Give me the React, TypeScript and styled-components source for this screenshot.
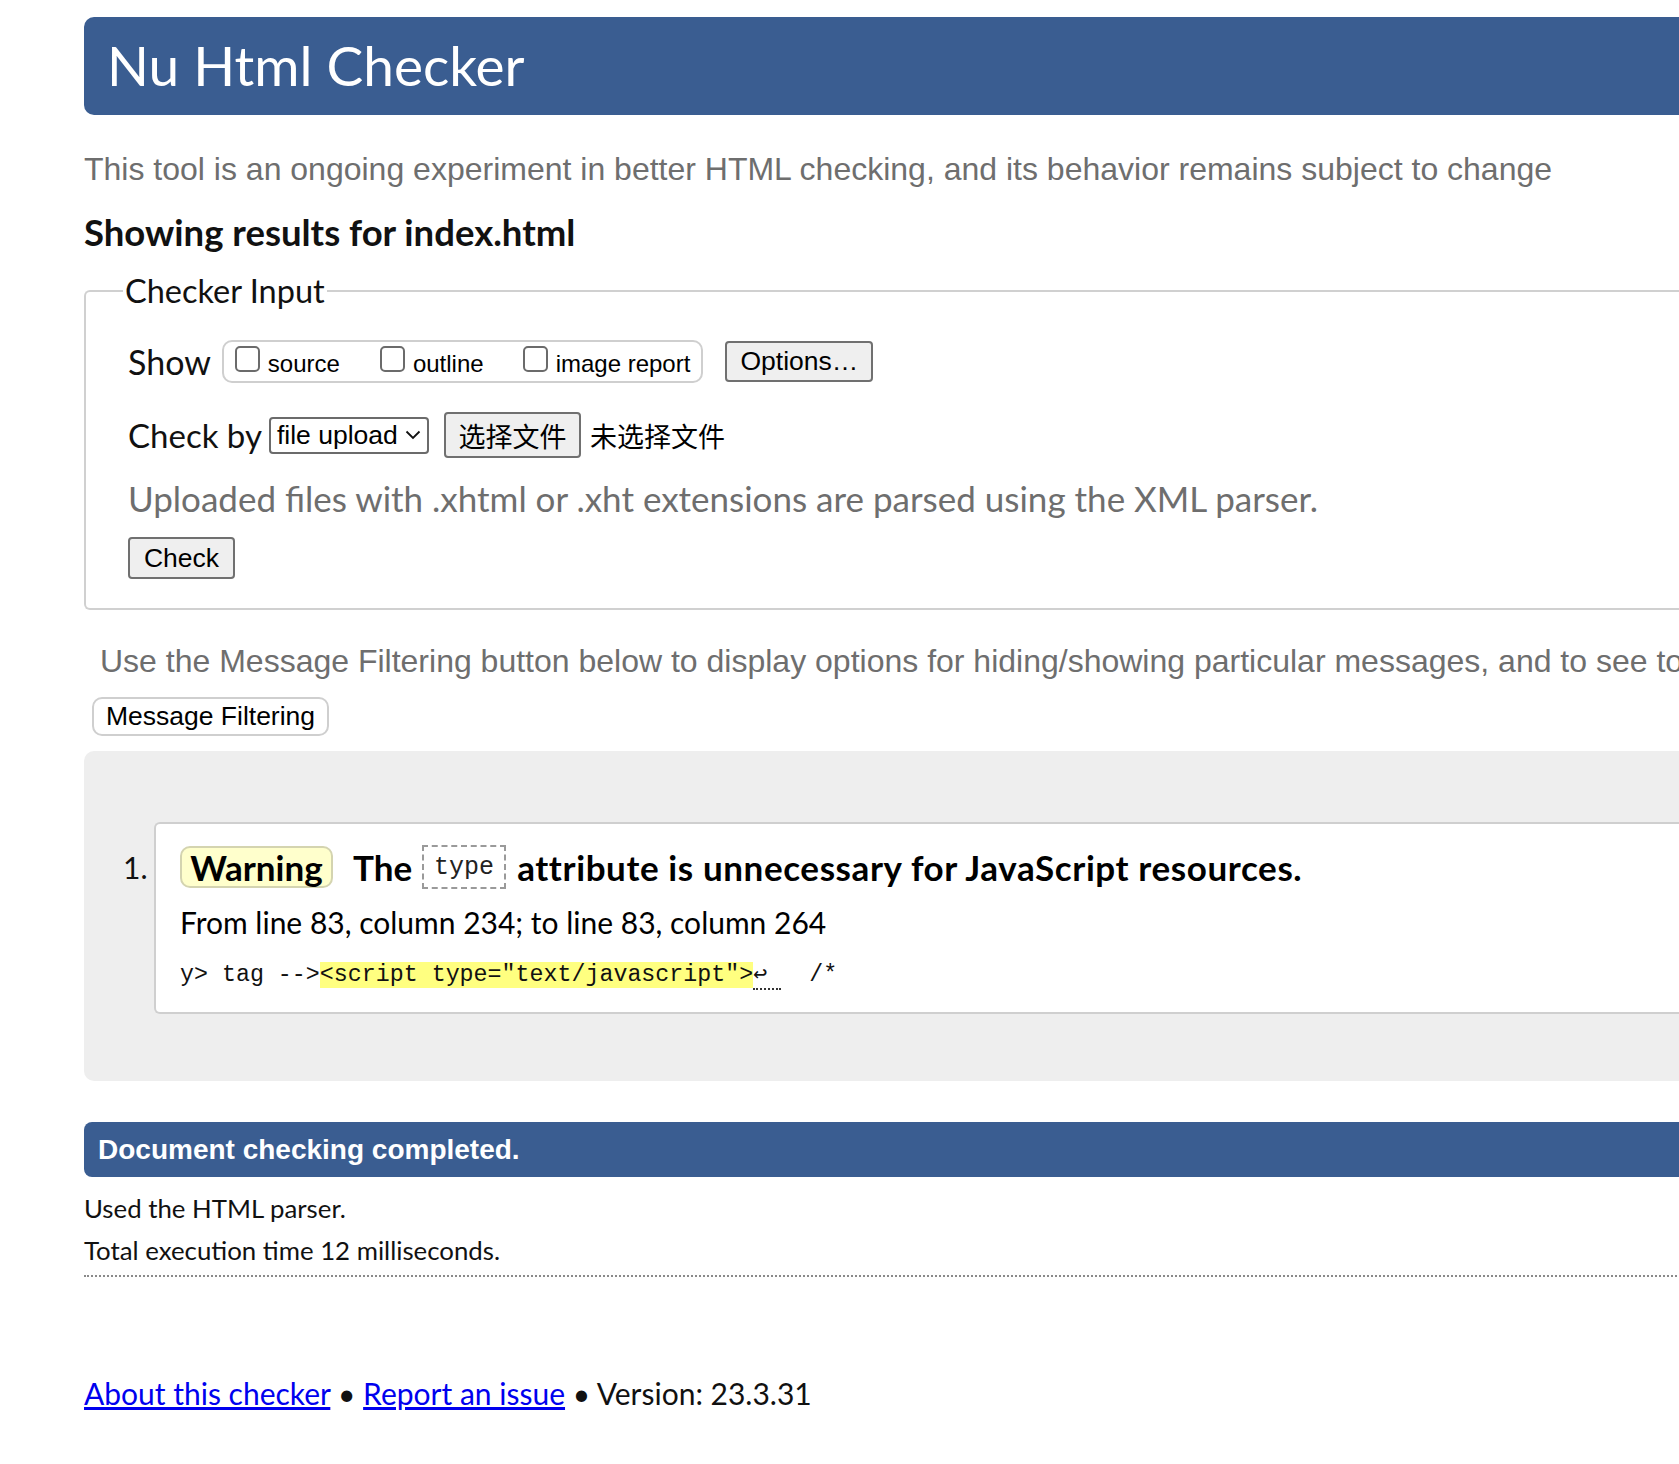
import React from 'react';
import styled, { createGlobalStyle } from 'styled-components';

const Global = createGlobalStyle`
  html, body { margin: 0; padding: 0; background: #fff; overflow: hidden; }
  body { font-family: Lato, "Noto Sans", sans-serif; color: #000; }
`;

const SEGOE = `Lato, "Noto Sans", sans-serif`;
const ARIAL = `"Liberation Sans", Arial, sans-serif`;
const CJK = `"Noto Sans CJK SC", "Liberation Sans", sans-serif`;
const MONO = `"Liberation Mono", "DejaVu Sans Mono", monospace`;
const BLUE = '#3a5d91';

const Page = styled.div`
  width: 1900px;
  box-sizing: border-box;
  padding: 17px 0 60px 84px;
`;

const Header = styled.h1`
  margin: 0;
  height: 98px;
  background: ${BLUE};
  color: #fff;
  border-radius: 10px 0 0 10px;
  padding-left: 23px;
  font: 400 55px/96px ${SEGOE};
`;

const Intro = styled.p`
  margin: 34px 0 0;
  font: 32px/40px ${ARIAL};
  color: #6e6e6e;
`;

const Showing = styled.h2`
  margin: 23px 0 0;
  font: 700 36.5px/40px ${SEGOE};
  color: #111;
`;

const Fieldset = styled.fieldset`
  margin: 19px 0 0;
  border: 2px solid #d0d0d0;
  border-radius: 6px 0 0 6px;
  border-right: none;
  padding: 29px 0 29px 42px;
`;

const Legend = styled.legend`
  margin-left: -5px;
  padding: 0 2px;
  font: 400 32.5px/40px ${SEGOE};
  color: #111;
`;

const Row = styled.div<{ $h: number; $mt?: number }>`
  display: flex;
  align-items: center;
  height: ${p => p.$h}px;
  margin-top: ${p => p.$mt ?? 0}px;
`;

const Label = styled.span<{ $mr: number; $size: number }>`
  font: 400 ${p => p.$size}px/40px ${SEGOE};
  color: #111;
  margin-right: ${p => p.$mr}px;
`;

const CheckGroup = styled.div`
  display: flex;
  align-items: center;
  height: 39px;
  border: 2px solid #cfcfcf;
  border-radius: 10px;
  padding: 0 11px 0 11px;
  margin-right: 22px;
`;

const CheckItem = styled.label<{ $mr?: number }>`
  display: flex;
  align-items: center;
  margin-right: ${p => p.$mr ?? 0}px;
  font: 24px/30px ${ARIAL};
  color: #000;
  padding-top: 4px;
`;

const Box = styled.span`
  display: inline-block;
  box-sizing: border-box;
  width: 25px;
  height: 26px;
  border: 2px solid #6b6b6b;
  border-radius: 5px;
  background: #fff;
  margin-right: 8px;
  margin-top: -10px;
`;

const Button = styled.button<{ $w: number; $h: number; $cjk?: boolean }>`
  box-sizing: border-box;
  width: ${p => p.$w}px;
  height: ${p => p.$h}px;
  background: #efefef;
  border: 2px solid #707070;
  border-radius: 4px;
  padding: 0;
  font: ${p => (p.$cjk ? `27px/1 ${CJK}` : `26.5px/1 ${ARIAL}`)};
  color: #000;
  text-align: center;
`;

const Select = styled.div`
  box-sizing: border-box;
  width: 160px;
  height: 37px;
  display: flex;
  align-items: center;
  justify-content: space-between;
  border: 2px solid #6b6b6b;
  border-radius: 4px;
  padding: 0 6px 0 6px;
  margin-right: 15px;
  font: 26.5px/1 ${ARIAL};
  color: #000;
`;

const NoFile = styled.span`
  margin-left: 9px;
  font: 27px/1 ${CJK};
  color: #000;
`;

const Uploaded = styled.p`
  margin: 20px 0 0;
  font: 400 35px/40px ${SEGOE};
  color: #6e6e6e;
`;

const CheckRow = styled.div`
  margin-top: 19px;
`;

const FilterNote = styled.p`
  margin: 31px 0 0 16px;
  font: 32px/40px ${ARIAL};
  color: #6e6e6e;
  white-space: nowrap;
`;

const FilterButton = styled.button`
  margin: 16px 0 0 8px;
  box-sizing: border-box;
  height: 39px;
  width: 237px;
  background: #fff;
  border: 2px solid #cfcfcf;
  border-radius: 10px;
  padding: 0;
  font: 26.5px/1 ${ARIAL};
  color: #000;
`;

const Results = styled.div`
  margin-top: 15px;
  background: #eee;
  border-radius: 10px 0 0 10px;
  padding: 71px 0 67px 39px;
`;

const Item = styled.div`
  display: flex;
`;

const Marker = styled.span`
  width: 31px;
  padding-top: 25px;
  font: 400 30px/40px ${SEGOE};
  color: #111;
`;

const MsgBox = styled.div`
  flex: 1;
  background: #fff;
  border: 2px solid #cfcfcf;
  border-right: none;
  border-radius: 6px 0 0 6px;
  padding: 22px 0 19px 24px;
`;

const TitleRow = styled.div`
  display: flex;
  align-items: center;
  height: 42px;
  font: 700 35px/40px ${SEGOE};
  color: #000;
`;

const Badge = styled.span`
  box-sizing: border-box;
  height: 42px;
  width: 153px;
  display: inline-flex;
  align-items: center;
  justify-content: center;
  background: #ffffcc;
  border: 2px solid #d4d4b0;
  border-radius: 10px;
  margin-right: 20px;
`;

const Word = styled.span<{ $mr?: number; $ls?: number }>`
  margin-right: ${p => p.$mr ?? 0}px;
  letter-spacing: ${p => p.$ls ?? 0}px;
`;

const Code = styled.code`
  box-sizing: border-box;
  height: 44px;
  width: 84px;
  display: inline-flex;
  align-items: center;
  justify-content: center;
  border: 2px dashed #9a9a9a;
  font: 400 25px/1 ${MONO};
  color: #222;
  margin-right: 11px;
`;

const Location = styled.p`
  margin: 14px 0 0;
  font: 400 30px/40px ${SEGOE};
  color: #000;
`;

const Extract = styled.pre`
  margin: 15px 0 0;
  font: 400 23.3px/36px ${MONO};
  color: #111;
`;

const Mark = styled.mark`
  background: #ffff80;
  color: #111;
`;

const Lf = styled.span`
  display: inline-block;
  width: 28px;
  text-align: left;
  line-height: 26px;
  border-bottom: 2px dotted #333;
`;

const Done = styled.div`
  margin-top: 41px;
  height: 55px;
  background: ${BLUE};
  border-radius: 8px 0 0 8px;
  padding-left: 14px;
  font: 700 28px/55px ${ARIAL};
  color: #fff;
`;

const Stat = styled.p<{ $mt: number }>`
  margin: ${p => p.$mt}px 0 0;
  font: 400 25.8px/32px ${SEGOE};
  color: #111;
`;

const Rule = styled.div`
  margin-top: 9px;
  border-top: 2px dotted #8a8a8a;
`;

const Footer = styled.p`
  margin: 96px 0 0;
  font: 400 30px/40px ${SEGOE};
  color: #111;
`;

const Link = styled.a`
  color: #0000ee;
  text-decoration: underline;
`;

const Chevron = () => (
  <svg width="16" height="10" viewBox="0 0 16 10" fill="none">
    <path d="M1.5 1.5 L8 8 L14.5 1.5" stroke="#111" strokeWidth="1.8" />
  </svg>
);

export default function App() {
  return (
    <Page>
      <Global />
      <Header>Nu Html Checker</Header>
      <Intro>This tool is an ongoing experiment in better HTML checking, and its behavior remains subject to change</Intro>
      <Showing>Showing results for index.html</Showing>
      <Fieldset>
        <Legend>Checker Input</Legend>
        <Row $h={43}>
          <Label $mr={11} $size={34}>Show</Label>
          <CheckGroup>
            <CheckItem $mr={40}><Box />source</CheckItem>
            <CheckItem $mr={39}><Box />outline</CheckItem>
            <CheckItem><Box />image report</CheckItem>
          </CheckGroup>
          <Button $w={148} $h={41}>Options…</Button>
        </Row>
        <Row $h={46} $mt={29}>
          <Label $mr={7} $size={33}>Check by</Label>
          <Select>
            <span>file upload</span>
            <Chevron />
          </Select>
          <Button $w={137} $h={46} $cjk>选择文件</Button>
          <NoFile>未选择文件</NoFile>
        </Row>
        <Uploaded>Uploaded files with .xhtml or .xht extensions are parsed using the XML parser.</Uploaded>
        <CheckRow>
          <Button $w={107} $h={42}>Check</Button>
        </CheckRow>
      </Fieldset>
      <FilterNote>
        Use the Message Filtering button below to display options for hiding/showing particular messages, and to see total counts of errors and warnings.
      </FilterNote>
      <FilterButton>Message Filtering</FilterButton>
      <Results>
        <Item>
          <Marker>1.</Marker>
          <MsgBox>
            <TitleRow>
              <Badge>Warning</Badge>
              <Word $mr={10}>The</Word>
              <Code>type</Code>
              <Word $ls={0.6}>attribute is unnecessary for JavaScript resources.</Word>
            </TitleRow>
            <Location>From line 83, column 234; to line 83, column 264</Location>
            <Extract>
              {'y> tag -->'}
              <Mark>{'<script type="text/javascript">'}</Mark>
              <Lf>↩</Lf>
              {'  /*'}
            </Extract>
          </MsgBox>
        </Item>
      </Results>
      <Done>Document checking completed.</Done>
      <Stat $mt={15}>Used the HTML parser.</Stat>
      <Stat $mt={10}>Total execution time 12 milliseconds.</Stat>
      <Rule />
      <Footer>
        <Link href="#">About this checker</Link> • <Link href="#">Report an issue</Link> • Version: 23.3.31
      </Footer>
    </Page>
  );
}
